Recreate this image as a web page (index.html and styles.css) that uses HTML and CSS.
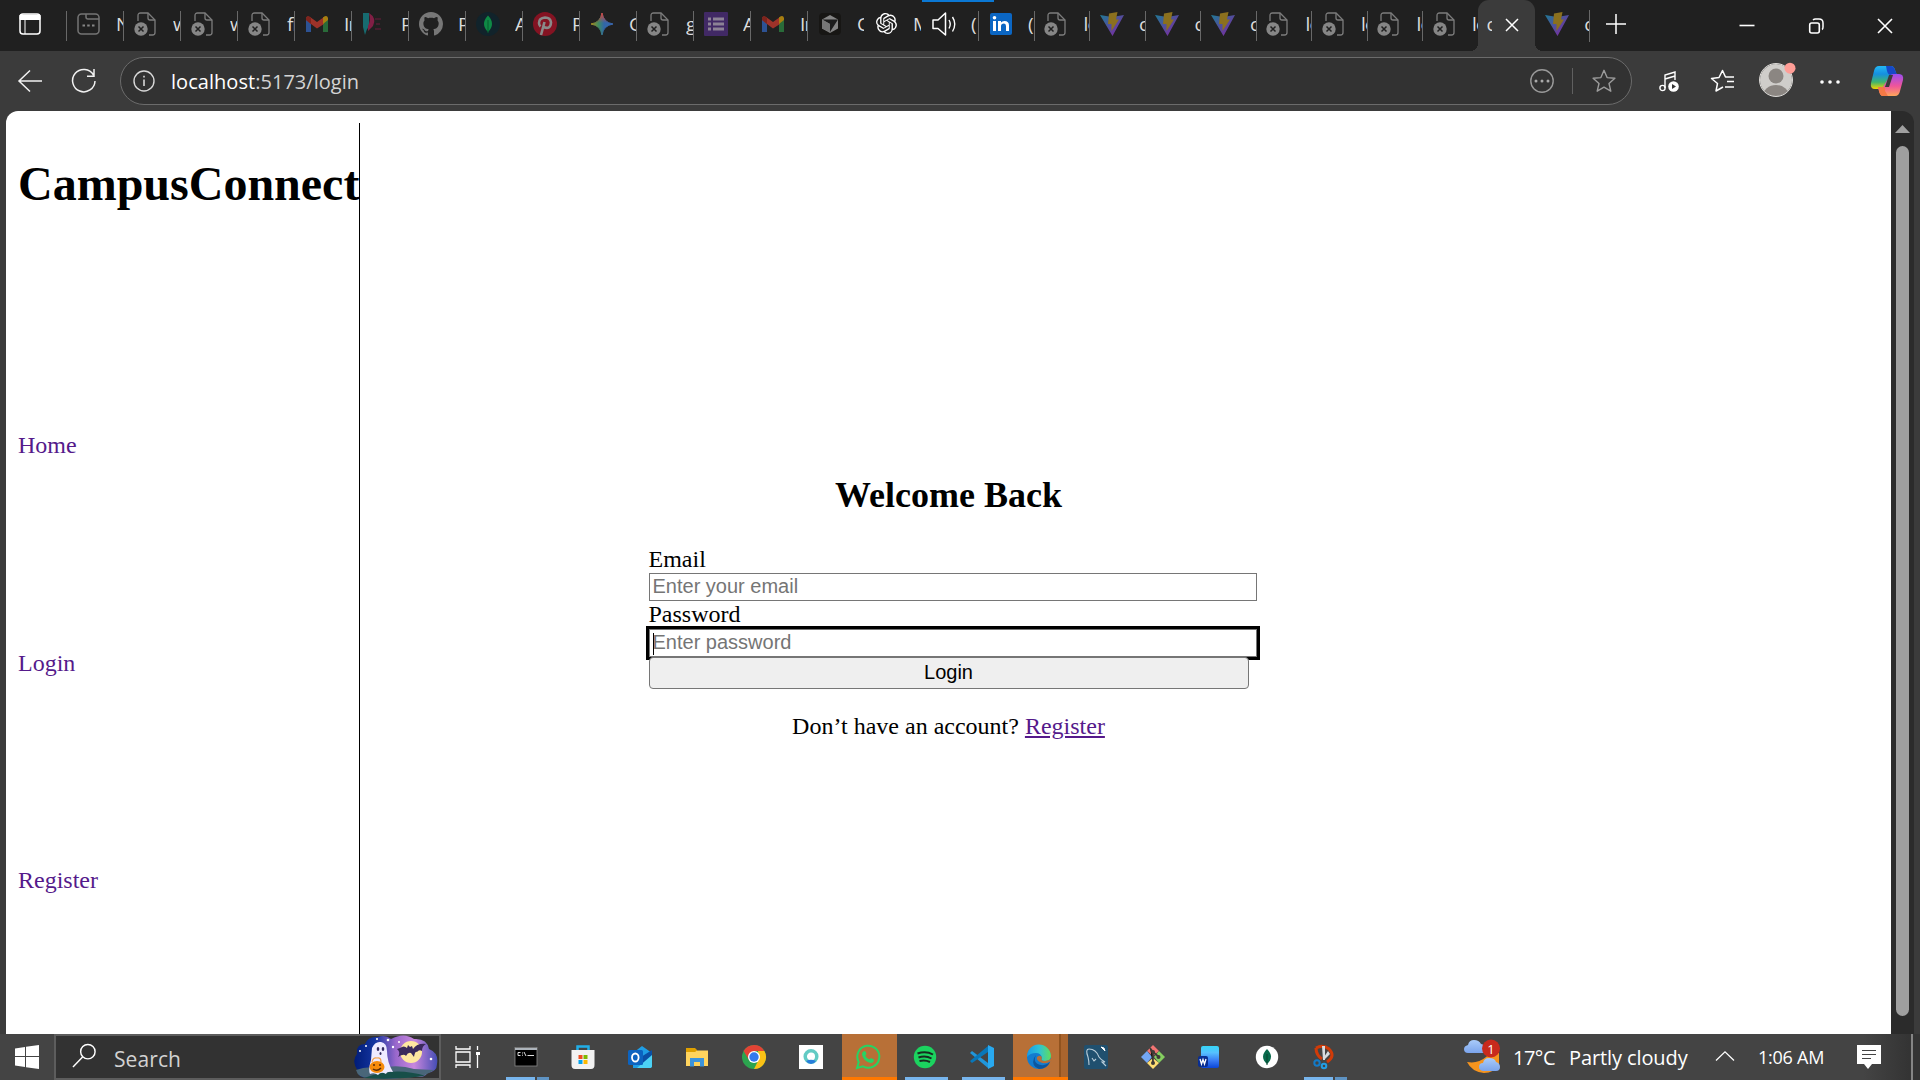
FILE: index.html
```html
<!DOCTYPE html>
<html lang="en">
<head>
<meta charset="utf-8">
<title>CampusConnect</title>
<link rel="stylesheet" href="styles.css">
</head>
<body>
<svg class="defs" width="0" height="0">
  <defs>
    <linearGradient id="gv" x1="0" y1="0" x2="1" y2="1"><stop offset="0" stop-color="#1f7a96"/><stop offset="1" stop-color="#8a1ea3"/></linearGradient>
    <linearGradient id="gg" x1="0" y1="0" x2="1" y2="0"><stop offset="0" stop-color="#a98c1d"/><stop offset=".35" stop-color="#3d8a62"/><stop offset=".6" stop-color="#3166a8"/><stop offset="1" stop-color="#3a67b0"/></linearGradient>
    <linearGradient id="gr" x1="0" y1="0" x2="0" y2="1"><stop offset="0" stop-color="#d04440"/><stop offset=".45" stop-color="#d04440" stop-opacity="0"/></linearGradient>
    <linearGradient id="gc1" x1="0" y1="0" x2="0" y2="1"><stop offset="0" stop-color="#23b8f4"/><stop offset=".35" stop-color="#158fe0"/><stop offset=".7" stop-color="#3fb56d"/><stop offset="1" stop-color="#f5d400"/></linearGradient>
    <linearGradient id="gc2" x1="0" y1="0" x2="0" y2="1"><stop offset="0" stop-color="#9a4cf0"/><stop offset=".55" stop-color="#f0559a"/><stop offset="1" stop-color="#ffa75a"/></linearGradient>
    <linearGradient id="ge" x1="0" y1="0" x2="1" y2="0"><stop offset="0" stop-color="#1a9be6"/><stop offset=".5" stop-color="#2cc2d8"/><stop offset="1" stop-color="#62dd59"/></linearGradient>
    <linearGradient id="gw" x1="0" y1="0" x2="0" y2="1"><stop offset="0" stop-color="#36d5f6"/><stop offset=".3" stop-color="#56c1ff"/><stop offset=".65" stop-color="#3a7df5"/><stop offset="1" stop-color="#0b45d8"/></linearGradient>
    <linearGradient id="gh" x1="0" y1="0" x2="1" y2="0"><stop offset="0" stop-color="#001c78"/><stop offset=".25" stop-color="#1435a0"/><stop offset=".5" stop-color="#9a68cc"/><stop offset=".72" stop-color="#c887dd"/><stop offset="1" stop-color="#454db5"/></linearGradient>
    <linearGradient id="gk" x1="0" y1="0" x2="0" y2="1"><stop offset="0" stop-color="#a9cbfa"/><stop offset="1" stop-color="#7ba4ec"/></linearGradient>
    <clipPath id="avatar-clip"><circle cx="17" cy="17" r="16"/></clipPath>
  </defs>
  <symbol id="file" viewBox="0 0 24 24"><path d="M4 9V3.500Q4 1 6.500 1H14L21 8V20.500Q21 23 18.500 23H15" fill="none" stroke="#7c7c7c" stroke-width="1.300"/><path d="M14 1V6Q14 8 16 8H21" fill="none" stroke="#7c7c7c" stroke-width="1.300"/><circle cx="7" cy="17" r="6.700" fill="#868686"/><path d="M4.500 14.500l5 5M9.500 14.500l-5 5" stroke="#202020" stroke-width="1.500"/></symbol>
  <symbol id="newtab" viewBox="0 0 24 24"><rect x="1" y="2" width="21" height="20" rx="3.500" fill="none" stroke="#747474" stroke-width="1.500"/><path d="M9 2V5Q9 7 11 7H22" fill="none" stroke="#747474" stroke-width="1.500"/><path d="M5.500 12.500h2.500v2H5.500zM10.200 12.500h2.500v2h-2.500zM15 12.500h2.500v2H15z" fill="#868686"/></symbol>
  <symbol id="gmail" viewBox="0 0 24 24"><path d="M1 20V7L6 10.500V20Z" fill="#2d5293"/><path d="M18 20V10.500L23 7V20Z" fill="#296b39"/><path d="M1 8V6Q2 3 5 5L12 10 19 5V12L12 16.500 6 12Z" fill="#9e3229"/><path d="M1 8V6.500Q2 3 5 5L6 5.500V12Z" fill="#7d241d"/><path d="M18 12V5.500Q22 2.500 23 6V8Z" fill="#a77e10"/></symbol>
  <symbol id="pitch" viewBox="0 0 24 24"><path d="M1 1H7V14Q4 18 3 23L1 15Z" fill="#176b70"/><path d="M7 1Q15 6 11 14L6 19V14Q9 9 7 1Z" fill="#811f45"/><path d="M13 7h6M14 12h4M13 17h6" stroke="#531c33" stroke-width="1.500"/></symbol>
  <symbol id="github" viewBox="0 0 16 16"><path fill="#777" d="M8 0C3.580 0 0 3.580 0 8c0 3.540 2.290 6.530 5.470 7.590.4.070.55-.17.55-.38 0-.19-.01-.82-.01-1.490-2.010.37-2.530-.49-2.690-.94-.09-.23-.48-.94-.82-1.130-.28-.15-.68-.52-.01-.53.63-.01 1.080.58 1.230.82.720 1.210 1.870.87 2.330.66.070-.52.28-.87.510-1.070-1.780-.2-3.640-.89-3.640-3.950 0-.87.310-1.590.82-2.150-.08-.2-.36-1.020.08-2.120 0 0 .67-.21 2.200.82.640-.18 1.320-.27 2-.27s1.360.09 2 .27c1.530-1.040 2.200-.82 2.200-.82.440 1.100.16 1.920.08 2.120.510.56.82 1.270.82 2.150 0 3.070-1.870 3.750-3.650 3.950.29.25.540.73.540 1.480 0 1.070-.01 1.930-.01 2.200 0 .21.150.46.550.38A8 8 0 0 0 16 8c0-4.420-3.580-8-8-8z"/></symbol>
  <symbol id="mongo-tab" viewBox="0 0 24 24"><circle cx="12" cy="12" r="12" fill="#11232b"/><path d="M12 3.500Q20 12 12 20Q4 12 12 3.500Z" fill="#0e8a45"/><path d="M12 8V21" stroke="#075c31" stroke-width="1"/></symbol>
  <symbol id="pinterest" viewBox="0 0 24 24"><circle cx="12" cy="12" r="12" fill="#841322"/><path d="M11.500 10L8 23M10.500 15Q17.500 18 18 10.500Q17.500 5.500 12 5.500Q6 6 6 11Q6 13 7.500 14.500" fill="none" stroke="#898989" stroke-width="2.600"/></symbol>
  <symbol id="gemini" viewBox="0 0 24 24"><path d="M12 1Q13.500 10.500 23 12Q13.500 13.500 12 23Q10.500 13.500 1 12Q10.500 10.500 12 1Z" fill="url(#gg)" stroke="url(#gg)"/><path d="M12 1Q13.500 10.500 23 12Q13.500 13.500 12 23Q10.500 13.500 1 12Q10.500 10.500 12 1Z" fill="url(#gr)" stroke="url(#gr)"/></symbol>
  <symbol id="forms" viewBox="0 0 24 24"><rect width="24" height="24" rx="1" fill="#412965"/><path d="M4 5.500h3v3H4zM9 5.500h11v3H9zM4 10.500h3v3H4zM9 10.500h11v3H9zM4 15.500h3v3H4zM9 15.500h11v3H9z" fill="#8c8295"/></symbol>
  <symbol id="cursor" viewBox="0 0 24 24"><rect x="1" y="1" width="22" height="22" rx="4" fill="#171614"/><path d="M12 3L20 7.500V16.500L12 21 4 16.500V7.500Z" fill="#858585"/><path d="M4 7.500H20L12 20V12Z" fill="#1d1d1d"/><path d="M4 7.500L12 12V20L4 16.500Z" fill="#777"/></symbol>
  <symbol id="openai" viewBox="0 0 24 24"><path fill="#fff" d="M22.282 9.821a5.985 5.985 0 0 0-.516-4.910 6.046 6.046 0 0 0-6.510-2.900A6.065 6.065 0 0 0 4.981 4.182a5.985 5.985 0 0 0-3.998 2.900 6.046 6.046 0 0 0 .743 7.097 5.980 5.980 0 0 0 .511 4.911 6.051 6.051 0 0 0 6.515 2.900A5.985 5.985 0 0 0 13.260 24a6.056 6.056 0 0 0 5.772-4.206 5.990 5.990 0 0 0 3.998-2.900 6.056 6.056 0 0 0-.748-7.073zM13.260 22.430a4.476 4.476 0 0 1-2.876-1.041l.141-.080 4.779-2.758a.795.795 0 0 0 .392-.681v-6.737l2.020 1.169a.071.071 0 0 1 .038.052v5.583a4.504 4.504 0 0 1-4.494 4.493zM3.600 18.304a4.471 4.471 0 0 1-.535-3.014l.142.085 4.783 2.759a.771.771 0 0 0 .780 0l5.843-3.369v2.332a.080.080 0 0 1-.033.062L9.740 19.950a4.500 4.500 0 0 1-6.140-1.646zM2.340 7.896a4.485 4.485 0 0 1 2.366-1.973V11.600a.766.766 0 0 0 .388.676l5.815 3.355-2.020 1.168a.076.076 0 0 1-.071 0l-4.830-2.786A4.504 4.504 0 0 1 2.340 7.872zm16.597 3.855l-5.833-3.387L15.119 7.200a.076.076 0 0 1 .071 0l4.830 2.791a4.494 4.494 0 0 1-.676 8.105v-5.678a.790.790 0 0 0-.407-.667zm2.010-3.023l-.141-.085-4.774-2.782a.776.776 0 0 0-.785 0L9.409 9.230V6.897a.066.066 0 0 1 .028-.061l4.830-2.787a4.500 4.500 0 0 1 6.680 4.660zM8.307 12.863l-2.020-1.164a.080.080 0 0 1-.038-.057V6.075a4.500 4.500 0 0 1 7.375-3.453l-.142.080L8.704 5.460a.795.795 0 0 0-.393.681zm1.097-2.365l2.602-1.500 2.607 1.500v2.999l-2.597 1.500-2.607-1.500z"/></symbol>
  <symbol id="speaker" viewBox="0 0 24 24"><path d="M1 8H6L13.500 1V23L6 16.500H1Z" fill="none" stroke="#fff" stroke-width="1.500" stroke-linejoin="round"/><path d="M17 8Q19.500 12 17 16.500M20.500 5Q25 12 20.500 19.500" fill="none" stroke="#fff" stroke-width="1.400"/></symbol>
  <symbol id="linkedin" viewBox="0 0 24 24"><rect x="1" y="1" width="22" height="22" rx="2" fill="#0b66c3"/><path d="M4 9h3v10H4zM9 9h3v1.500Q13 9 15.500 9Q20 9 20 13.500V19H17V14Q17 11.500 15 11.500Q12 11.500 12 14V19H9Z" fill="#fff"/><circle cx="5.500" cy="5.700" r="1.800" fill="#fff"/></symbol>
  <symbol id="vite" viewBox="0 0 24 24"><path d="M0 3L12 5 24 3 12.500 24Z" fill="url(#gv)"/><path d="M9 1.500L17.500 0 16 7.500H19L11.500 19V12H8Z" fill="#8b701e"/></symbol>
  <symbol id="star" viewBox="0 0 24 24"><path d="M12 1.300L15.100 8.600 22.900 9.300 17 14.500 18.800 22.200 12 18.100 5.200 22.200 7 14.500 1.100 9.300 8.900 8.600Z" fill="none" stroke="currentColor" stroke-width="1.400" stroke-linejoin="round"/></symbol>
</svg>

<header class="tabstrip">
  <svg class="workspace" viewBox="0 0 22 22"><rect x="1" y="1" width="20" height="20" rx="3" fill="none" stroke="#fff" stroke-width="1.500"/><path d="M1 2H21V6.500H1ZM6 6V21" fill="#fff" stroke="#fff" stroke-width="1"/></svg>
  <div class="tabs">
    <div class="tab"><svg><use href="#newtab"/></svg><span>N</span></div>
    <div class="tab"><svg><use href="#file"/></svg><span>w</span></div>
    <div class="tab"><svg><use href="#file"/></svg><span>w</span></div>
    <div class="tab"><svg><use href="#file"/></svg><span>fr</span></div>
    <div class="tab"><svg><use href="#gmail"/></svg><span>In</span></div>
    <div class="tab"><svg><use href="#pitch"/></svg><span>P</span></div>
    <div class="tab"><svg><use href="#github"/></svg><span>P</span></div>
    <div class="tab"><svg><use href="#mongo-tab"/></svg><span>A</span></div>
    <div class="tab"><svg><use href="#pinterest"/></svg><span>P</span></div>
    <div class="tab"><svg><use href="#gemini"/></svg><span>G</span></div>
    <div class="tab"><svg><use href="#file"/></svg><span>g</span></div>
    <div class="tab"><svg><use href="#forms"/></svg><span>A</span></div>
    <div class="tab"><svg><use href="#gmail"/></svg><span>In</span></div>
    <div class="tab"><svg><use href="#cursor"/></svg><span>C</span></div>
    <div class="tab plain"><svg class="smaller"><use href="#openai"/></svg><span>M</span></div>
    <div class="tab plain playing"><svg><use href="#speaker"/></svg><span>(</span></div>
    <div class="tab slim"><svg><use href="#linkedin"/></svg><span>(</span></div>
    <div class="tab slim"><svg><use href="#file"/></svg><span>lo</span></div>
    <div class="tab slim"><svg><use href="#vite"/></svg><span>c</span></div>
    <div class="tab slim"><svg><use href="#vite"/></svg><span>c</span></div>
    <div class="tab slim"><svg><use href="#vite"/></svg><span>c</span></div>
    <div class="tab slim"><svg><use href="#file"/></svg><span>lo</span></div>
    <div class="tab slim"><svg><use href="#file"/></svg><span>lo</span></div>
    <div class="tab slim"><svg><use href="#file"/></svg><span>lo</span></div>
    <div class="tab slim"><svg><use href="#file"/></svg><span>lo</span></div>
    <div class="tab active"><span>c</span><svg viewBox="0 0 14 14"><path d="M1 1L13 13M13 1L1 13" stroke="#fff" stroke-width="1.500"/></svg></div>
    <div class="tab slim plain"><svg><use href="#vite"/></svg><span>c</span></div>
  </div>
  <svg class="plus" viewBox="0 0 22 22"><path d="M11 1V21M1 11H21" stroke="#fff" stroke-width="1.500"/></svg>
  <div class="window-buttons">
    <svg viewBox="0 0 18 18"><path d="M1.500 8.500H16.500" stroke="#fff" stroke-width="1.600"/></svg>
    <svg viewBox="0 0 18 18"><rect x="2.700" y="6" width="9.600" height="10" rx="2" fill="none" stroke="#fff" stroke-width="1.600"/><path d="M6 3Q7 2 8.500 2H12Q16 2 16 6V10Q16 12 15 12.500" fill="none" stroke="#fff" stroke-width="1.500"/></svg>
    <svg viewBox="0 0 18 18"><path d="M2 2L16 16M16 2L2 16" stroke="#fff" stroke-width="1.600"/></svg>
  </div>
</header>

<div class="toolbar">
  <svg class="back" viewBox="0 0 24 24"><path d="M24 12H1M12 1.500L1 12 12 22.500" fill="none" stroke="#f2f2f2" stroke-width="1.500"/></svg>
  <svg class="reload" viewBox="0 0 24 24"><path d="M23 12A11.200 11.200 0 1 1 21.500 6M15 7.300H22V0" fill="none" stroke="#f2f2f2" stroke-width="1.500"/></svg>
  <div class="address">
    <svg viewBox="0 0 22 22"><circle cx="11" cy="11" r="10" fill="none" stroke="#d8d8d8" stroke-width="1.400"/><path d="M11 9.500V16M11 5.700V7.500" stroke="#d8d8d8" stroke-width="1.600"/></svg>
    <div class="url"><b>localhost</b>:5173/login</div>
    <svg class="more" viewBox="0 0 24 24"><circle cx="12" cy="12" r="11.200" fill="none" stroke="#999" stroke-width="1.400"/><g fill="#aaa"><circle cx="6" cy="12" r="1.500"/><circle cx="12" cy="12" r="1.500"/><circle cx="18" cy="12" r="1.500"/></g></svg>
    <i class="sep"></i>
    <svg class="fav"><use href="#star"/></svg>
  </div>
  <svg class="music" viewBox="0 0 20 22"><path d="M6 18V5L16 2V10M6 9L16 6" fill="none" stroke="#fff" stroke-width="1.400"/><circle cx="3.500" cy="18" r="2.600" fill="none" stroke="#fff" stroke-width="1.400"/><circle cx="14.500" cy="16.500" r="5.300" fill="#fff"/><path d="M13 14L17 16.500 13 19Z" fill="#333"/></svg>
  <svg class="favorites" viewBox="0 0 25 24"><path d="M13 18L6 22 7.500 14.500 1.500 9.500 9 8.500 12.500 1.500 15.500 8H24M17 12.500H24M15 18H24" fill="none" stroke="#fff" stroke-width="1.500" stroke-linejoin="round"/></svg>
  <svg class="profile" viewBox="0 0 38 36"><g clip-path="url(#avatar-clip)"><rect width="34" height="34" fill="#cfcdca"/><circle cx="17" cy="13" r="7.500" fill="#8b8682"/><ellipse cx="17" cy="33" rx="13" ry="11" fill="#8b8682"/></g><circle cx="17" cy="17" r="16.500" fill="none" stroke="#dddbd8"/><circle cx="31" cy="5.200" r="5.500" fill="#ff9d96"/></svg>
  <svg class="dots" viewBox="0 0 20 6"><g fill="#fff"><circle cx="2" cy="3" r="1.800"/><circle cx="10" cy="3" r="1.800"/><circle cx="18" cy="3" r="1.800"/></g></svg>
  <svg class="copilot" viewBox="0 0 34 32"><path d="M9 1H21Q24 1 25 5L27 10H21L15 21Q14 24 10 24H5Q0 24 1 18L4 6Q5 1 9 1Z" fill="url(#gc1)"/><path d="M16 1H21Q24 1 25 5L27 10H21Q18 10 17 6Z" fill="#1648c7"/><path d="M25 31H13Q10 31 9 26L8 22H13L19 12Q20 9 24 9H29Q34 9 33 15L30 26Q29 31 25 31Z" fill="url(#gc2)"/><path d="M18 31H13Q10 31 9 26L8 22H13Q16 22 15 26Z" fill="#f47945"/><path d="M19 10H23L19 22H15Z" fill="#3b3b3b"/></svg>
</div>

<div class="viewport">
  <div class="page">
    <nav class="sidebar">
      <h1>CampusConnect</h1>
      <a>Home</a><a>Login</a><a>Register</a>
    </nav>
    <main class="content">
      <div class="login">
        <h2>Welcome Back</h2>
        <label class="first">Email</label>
        <div class="field">Enter your email</div>
        <label>Password</label>
        <div class="field focused">Enter password</div>
        <div class="submit">Login</div>
        <p>Don’t have an account? <a>Register</a></p>
      </div>
    </main>
  </div>
  <div class="scrollbar"><svg viewBox="0 0 15 8"><path d="M7.500 0L15 8H0Z" fill="#a0a0a0"/></svg><div class="thumb"></div></div>
</div>

<footer class="taskbar">
  <div class="start"><svg viewBox="0 0 24 24"><path d="M0 3.500L10 2V11H0ZM11 1.800L24 0V11H11ZM0 12H10V22L0 20.500ZM11 12H24V24L11 22.200Z" fill="#fff"/></svg></div>
  <div class="search">
    <svg viewBox="0 0 26 26"><circle cx="16.500" cy="9" r="7.500" fill="none" stroke="#fff" stroke-width="1.500"/><path d="M11 14.500L1 25" stroke="#fff" stroke-width="1.500"/></svg>
    <span>Search</span>
    <svg class="spooky" viewBox="0 0 84 43"><path d="M4 35Q-3 25 3 18Q2 8 11 8Q14 0 24 1Q31 -2 37 3Q50 -4 60 3Q73 2 75 13Q85 17 83 28Q83 36 73 37Q71 43 58 40Q35 45 15 41Q4 43 4 35Z" fill="url(#gh)"/><path d="M2 34Q12 30 25 32Q45 28 60 33L80 34Q72 39 68 40Q35 44 15 42Q4 42 2 34Z" fill="#496679"/><path d="M10 42Q40 30 72 40Q40 44 10 42Z" fill="#174f49"/><circle cx="57" cy="16" r="11" fill="#ffe7a0"/><path d="M43 13L46 12Q50 9 53 12L54 9 56 11 58 10 59 13Q63 7 72 8Q68 10 68 15Q65 13 63 16Q61 15 60 21L57 17Q54 16 52 20Q50 17 44 21Q47 16 43 13Z" fill="#3b2a5c"/><path d="M16 38Q14 34 17 24L18 12Q21 5 27 6Q33 7 33 15Q33 26 39 36Q33 35 32 38Q27 35 24 39Q20 36 16 38Z" fill="#eeeaff"/><ellipse cx="24" cy="13" rx="1.300" ry="2" fill="#322a61"/><ellipse cx="29" cy="13" rx="1.300" ry="2" fill="#322a61"/><ellipse cx="26.500" cy="17.500" rx="1" ry="1.500" fill="#322a61"/><path d="M18 26Q19 21 23 22Q27 21 27 26" fill="none" stroke="#f3a24a" stroke-width="1.200"/><ellipse cx="23" cy="31" rx="7.500" ry="6" fill="#f68b0c"/><path d="M19 29h2M25 29h2M19 33Q23 36 27 32" stroke="#5a2b08" stroke-width="1.500" fill="none"/><g fill="#fff"><circle cx="12" cy="10" r="1"/><circle cx="6" cy="15" r="1"/><circle cx="23" cy="3" r="1"/><circle cx="34" cy="4" r="1.300"/><circle cx="39" cy="11" r="1.200"/><circle cx="45" cy="6" r="1"/><circle cx="77" cy="23" r="1.300"/></g></svg>
  </div>
  <div class="apps">
    <div class="app"><svg viewBox="0 0 24 24"><path d="M1 1V4H15V1M1 23V20H15V23M1 7H15V17H1Z" fill="none" stroke="#fff" stroke-width="1.300"/><path d="M22.500 1V5M22.500 10V23" stroke="#fff" stroke-width="1.300"/><path d="M21 7h4v3h-4z" fill="#fff"/></svg></div>
    <div class="app group"><svg viewBox="0 0 24 24"><rect x="1" y="2.500" width="22" height="18.500" fill="#000" stroke="#888" stroke-width=".8"/><path d="M1 3H23V5H1Z" fill="#adb4bb"/><path d="M6.500 7.500H4V10.500H6.500M8.500 7.500v1M8.500 9.700v1M10 7l2 4M13.500 10.500H20" stroke="#ddd" fill="none"/></svg></div>
    <div class="app"><svg viewBox="0 0 24 24"><path d="M6.500 6V1.500H17.500V6" fill="none" stroke="#20aee8" stroke-width="2.500"/><path d="M.5 5H23.500V20Q23.500 24 20 24H4Q.5 24 .5 20Z" fill="#f2f2f2"/><path d="M7.500 10h4v4h-4z" fill="#f04e23"/><path d="M12.500 10h4v4h-4z" fill="#7eb900"/><path d="M7.500 15h4v4h-4z" fill="#02a3ee"/><path d="M12.500 15h4v4h-4z" fill="#fdb900"/></svg></div>
    <div class="app"><svg viewBox="0 0 24 24"><path d="M5 8L14 1 24 8V21Q24 23 21 23H5Z" fill="#1f9de5"/><path d="M13 12L24 5V15L14 19Z" fill="#0a4fa5"/><path d="M9 23L24 10V21Q24 23 21 23Z" fill="#4cd2f5"/><rect y="5" width="15" height="15" rx="1.500" fill="#0c63c0"/><ellipse cx="7.300" cy="12.500" rx="3.300" ry="4" fill="none" stroke="#fff" stroke-width="1.800"/></svg></div>
    <div class="app"><svg viewBox="0 0 24 24"><path d="M1 3H10L12 5V8H1Z" fill="#dfa000"/><path d="M1 7H10L12 5.500H23V21H1Z" fill="#ffd45e"/><path d="M5 21V13H19V21.500H15V17H9V21.500H5Z" fill="#3c94dc"/></svg></div>
    <div class="app"><svg viewBox="0 0 24 24"><circle cx="12" cy="12" r="12" fill="#2ca44f"/><path d="M1.600 6A12 12 0 0 1 22.400 6H12L7 15Z" fill="#e24335"/><path d="M22.400 6A12 12 0 0 1 12 24L17 14 16 6Z" fill="#fbc116"/><circle cx="12" cy="12" r="6" fill="#fff"/><circle cx="12" cy="12" r="4.700" fill="#3379ed"/></svg></div>
    <div class="app"><svg viewBox="0 0 24 24"><path d="M0 0H24V24H0Z" fill="#fff"/><circle cx="12" cy="11.500" r="5.800" fill="none" stroke="#62cbc4" stroke-width="3.500"/><path d="M7 16Q12 13.500 17 16Q15 19 12 19Q9 19 7 16Z" fill="#287edb"/></svg></div>
    <div class="app alert"><svg viewBox="0 0 24 24"><path d="M1 23L2.700 17A11 11 0 1 1 7 21.300Z" fill="none" stroke="#27d363" stroke-width="2"/><path d="M8.500 6Q10 6 10.500 9Q9 10 9.500 11Q11 14 13.500 14.500L15 13 18 14.500Q18 18 14.500 18Q7 16 6 9.500Q6 6.500 8.500 6Z" fill="#27d363"/></svg></div>
    <div class="app open"><svg viewBox="0 0 24 24"><circle cx="12" cy="12" r="11.200" fill="#1bd35f"/><path d="M4.500 8.500Q13 5.500 20 9.500M5.500 12.500Q12.500 10 18.500 13.500M6.500 16Q12 14.500 17 17" fill="none" stroke="#172c20" stroke-width="2"/></svg></div>
    <div class="app open"><svg viewBox="0 0 24 24"><path d="M0 8L2 6 18 18V23Z" fill="#2096db"/><path d="M0 16L18 1V7L2 18Z" fill="#0877b9"/><path d="M18 0L24 3V21L18 24Z" fill="#28a9f0"/></svg></div>
    <div class="app alert stacked"><svg viewBox="0 0 24 24"><circle cx="12" cy="12" r="12" fill="#137cd0"/><path d="M0 12A12 12 0 0 1 24 11Q24 16 18 16Q13 16 15 13Q14 8 9 8Q3 8 0 12Z" fill="url(#ge)"/><path d="M9 10Q5 18 14 20Q19 21 23 17Q20 24 12 24Q4 21 7 13Z" fill="#0c559e"/><path d="M10 12Q9 15 13 17Q18 20 24 16L25 13Q22 16 18 16Q13 16 15 13Q14 9 10 12Z" fill="#b87037"/></svg></div>
    <div class="app"><svg viewBox="0 0 24 24"><rect width="24" height="24" rx="2" fill="#20506f"/><path d="M5 20Q5 16 4 12Q1 4 5 4Q12 4 15 12Q17 15 21 17L18 17 22 21M8 13L10 16 12 14" fill="none" stroke="#b9ccd8" stroke-width="1.100"/><path d="M17 2L21 6 20 3Z" stroke="#fff" fill="#fff"/></svg></div>
    <div class="app"><svg viewBox="0 0 24 24"><path d="M12 0L18 6 12 11 6 6Z" fill="#f27473"/><path d="M18 6L24 12 18 18 13 12Z" fill="#85cf60"/><path d="M6 6L11 12 6 18 0 12Z" fill="#73a6f5"/><path d="M12 13L18 18 12 24 6 18Z" fill="#ffde73"/><path d="M9 3L12 7V19M12 7L18 12" stroke="#403b38" stroke-width="1.700"/><g fill="#403b38"><circle cx="12" cy="7" r="2"/><circle cx="12" cy="18" r="2"/><circle cx="17.500" cy="12" r="2"/></g></svg></div>
    <div class="app"><svg viewBox="0 0 24 24"><rect x="3" y="1" width="18" height="22" rx="2" fill="url(#gw)"/><rect y="11" width="10" height="11" rx="2" fill="#092e92"/><path d="M2 14L3.500 19 5 14.500 6.500 19 8 14" fill="none" stroke="#fff" stroke-width="1.300"/></svg></div>
    <div class="app"><svg viewBox="0 0 24 24"><circle cx="12" cy="12" r="11.200" fill="#fff"/><path d="M12 4Q20 12 12 19Q4 12 12 4Z" fill="#086a4c"/><path d="M12 9V20" stroke="#08452f"/></svg></div>
    <div class="app group"><svg viewBox="0 0 24 24"><path d="M4 3Q11 -1 17 4Q24 11 15 17M4 3Q4 10 10 14" fill="none" stroke="#d13b08" stroke-width="3"/><path d="M10 1H13V15H11ZM16 6L18 9 12 15V12Z" fill="#d7dbdf"/><circle cx="5" cy="18" r="2.700" fill="none" stroke="#137ac7" stroke-width="2"/><circle cx="12" cy="21" r="2.300" fill="none" stroke="#229ee5" stroke-width="2"/></svg></div>
  </div>
  <div class="tray">
    <svg class="weather" viewBox="0 0 37 34"><path d="M3 23Q14 25 22 18Q27 14 29 14H35V25Q30 34 20 34Q8 33 3 23Z" fill="#f6941e"/><path d="M4 14Q0 14 0 10Q0 7 4 6Q5 1 10 1Q15 1 17 5Q21 5 22 14Z" fill="url(#gk)"/><path d="M19 32Q15 31 15 28Q15 24 19 24Q20 19 25 19Q31 19 32 23Q36 24 36 28Q36 32 32 32Z" fill="url(#gk)"/><circle cx="27" cy="9.500" r="9" fill="#c82a1d"/><text x="27" y="14.500" text-anchor="middle">1</text></svg>
    <span class="temp">17°C</span><span class="sky">Partly cloudy</span>
    <svg class="chevron" viewBox="0 0 18 10"><path d="M0 9.500L9 .8 18 9.500" fill="none" stroke="#fff" stroke-width="1.300"/></svg>
    <span class="clock">1:06 AM</span>
    <svg class="notes" viewBox="0 0 24 24"><path d="M0 0H24V19H15L11 24 7 19H0Z" fill="#fff"/><path d="M5 5.500H19M5 9.500H19M5 13.500H14" stroke="#444" stroke-width="1.200"/></svg>
    <i class="desktop"></i>
  </div>
</footer>
</body>
</html>
```
FILE: styles.css
```css
* { box-sizing: border-box; }
body { margin: 0; width: 1920px; height: 1080px; overflow: hidden; display: flex; flex-direction: column; background: #3b3b3b; font-family: "Open Sans", "Noto Sans", sans-serif; color: #fff; }
svg { display: block; flex: none; overflow: visible; }
.defs { position: absolute; }

.tabstrip { height: 51px; flex: none; background: #202020; display: flex; align-items: center; }
.workspace { width: 22px; height: 22px; margin: 0 25px 4px 19px; }
.tabs { display: flex; height: 51px; width: 1525px; flex: none; }
.tab { width: 57px; flex: none; display: flex; align-items: flex-start; padding: 12px 0 0; font-size: 19px; position: relative; color: #ddd; }
.tab::before { content: ""; width: 1px; height: 30px; background: #686868; margin-top: -1px; }
.tab svg { width: 24px; height: 24px; margin-left: 10px; }
.tab svg.smaller { width: 21px; height: 21px; margin: 1px 1px 0 11px; }
.tab span { width: 8px; height: 26px; overflow: hidden; line-height: 24px; margin-left: 15px; white-space: nowrap; letter-spacing: -.8px; }
.tab.slim { width: 55.5px; }
.tab.slim span { width: 6px; }
.tab.plain::before { background: transparent; }
.playing::after { content: ""; position: absolute; left: 1px; top: 0; width: 72px; height: 2px; background: #0b78d4; z-index: 2; }
.tab.slim.plain { border-right: 1px solid #686868; border-image: linear-gradient(transparent 11px, #686868 11px, #686868 41px, transparent 41px) 1; }
.tab.active { width: 57px; background: #3b3b3b; border-radius: 11px 11px 0 0; }
.tab.active::before { position: absolute; left: -8px; bottom: 0; width: 8px; height: 8px; margin: 0; background: radial-gradient(circle at 0 0, transparent 8px, #3b3b3b 8px); }
.tab.active::after { content: ""; position: absolute; right: -8px; bottom: 0; width: 8px; height: 8px; background: radial-gradient(circle at 100% 0, transparent 8px, #3b3b3b 8px); }
.tab.active span { width: 5px; margin-left: 9px; }
.tab.active svg { width: 14px; height: 14px; margin: 6px 0 0 13px; }
.plus { width: 22px; height: 22px; margin: 0 0 4px 14px; }
.window-buttons { display: flex; gap: 51px; margin-left: 111px; }
.window-buttons svg { width: 18px; height: 18px; }

.toolbar { height: 60px; flex: none; display: flex; align-items: center; }
.back { width: 24px; height: 24px; margin-left: 18px; }
.reload { width: 24px; height: 24px; margin-left: 30px; }
.address { width: 1512px; height: 48px; margin-left: 24px; border: 1px solid #6b6b6b; border-radius: 24px; background: #323232; display: flex; align-items: center; flex: none; padding: 0 15px 0 12px; }
.address svg { width: 22px; height: 22px; }
.url { width: 1375px; flex: none; padding: 2px 0 0 16px; font-size: 20px; line-height: 28px; letter-spacing: .04px; color: #d4d4d4; }
.url b { font-weight: 400; color: #fff; }
.address .more { width: 24px; height: 24px; }
.sep { width: 1px; height: 26px; background: #606060; margin: 0 19px 0 18px; }
.address .fav { width: 24px; height: 24px; color: #9c9c9c; }
.music { width: 20px; height: 22px; margin-left: 27px; }
.favorites { width: 25px; height: 24px; margin-left: 31px; }
.profile { width: 38px; height: 36px; margin-left: 24px; }
.dots { width: 20px; height: 6px; margin: 2px 0 0 23px; }
.copilot { width: 34px; height: 32px; margin-left: 30px; }

.viewport { height: 923px; flex: none; margin: 0 6px; display: flex; }
.page { width: 1885px; background: #fff; border-radius: 12px 0 0 0; padding: 12px 12px 0; display: flex; color: #000; font: 24px "Liberation Serif", serif; }
.sidebar { width: 342px; border-right: 1px solid #000; display: flex; flex-direction: column; }
.sidebar h1 { font-size: 48px; line-height: 55px; margin: 33px 0 4px; height: 177px; flex: none; }
.sidebar a { height: 217.5px; display: flex; align-items: center; flex: none; color: #551a8b; }
.content { flex: 1; padding: 356px 0 0 288.5px; }
.login { width: 600px; }
.login h2 { font-size: 36px; line-height: 41px; margin: -4px 0 30px; text-align: center; }
.login label { display: block; height: 28px; line-height: 27px; }
.login .first { height: 27px; }
.field { width: 608px; height: 28px; border: 1px solid #767676; padding: 0 3px; font: 20px/25px "Liberation Sans", sans-serif; color: #757575; }
.focused { outline: 3px solid #000; position: relative; }
.focused::before { content: ""; position: absolute; left: 3px; top: 3px; width: 1px; height: 22px; background: #000; }
.submit { position: relative; height: 32px; border: 1px solid #767676; border-radius: 4px; background: #efefef; text-align: center; font: 20px/29px "Liberation Sans", sans-serif; }
.login p { margin: 24px 0 0; line-height: 27px; text-align: center; }
.login p a { color: #551a8b; text-decoration: underline; }
.scrollbar { width: 23px; background: #2b2b2b; border-radius: 0 12px 0 0; display: flex; flex-direction: column; align-items: center; }
.scrollbar svg { width: 15px; height: 8px; margin-top: 14px; }
.thumb { width: 13px; height: 870px; margin-top: 13px; border-radius: 7px; background: #9f9f9f; }

.taskbar { height: 46px; flex: none; background: #444; display: flex; }
.start { width: 54px; padding: 11px 15px; }
.start svg { width: 24px; height: 24px; }
.search { width: 387px; border: 2px solid #5d5d5d; background: #323232; display: flex; align-items: center; padding-left: 16px; flex: none; color: #d2d2d2; font-size: 21px; letter-spacing: .1px; }
.search > svg:first-child { width: 25px; height: 25px; margin-top: -3px; }
.search span { width: 240px; margin: 3px 0 0 17px; line-height: 30px; }
.search .spooky { width: 84px; height: 43px; }
.apps { display: flex; flex: none; }
.app { width: 57px; height: 46px; position: relative; padding: 11px 16px 0; }
.app svg { width: 24px; height: 24px; }
.app:first-child { padding-left: 14px; }
.app.open { background: linear-gradient(#77b5ed, #77b5ed) 8px 43px / 43px 3px no-repeat; }
.app.group { background: linear-gradient(90deg, #77b5ed 29px, #444 29px, #444 31px, #5e93c3 31px) 8px 43px / 43px 3px no-repeat; }
.app.alert { background: linear-gradient(#b87037 43px, #ff7800 43px) 2px 0 / 55px 46px no-repeat; }
.app.stacked::after { content: ""; position: absolute; right: 0; top: 0; width: 7px; height: 43px; background: #aa652e; border-left: 2px solid #91531f; }
.tray { flex: 1; display: flex; align-items: center; padding-left: 111px; background: linear-gradient(90deg, #444 90%, #343434 98%); }
.weather { width: 37px; height: 34px; margin-top: -2px; }
.weather text { font-size: 13px; fill: #fff; }
.tray span { flex: none; white-space: nowrap; font-size: 20px; line-height: 28px; margin-top: 2px; }
.tray .temp { width: 56px; margin-left: 12px; letter-spacing: -.5px; }
.tray .sky { width: 147px; letter-spacing: -.1px; }
.chevron { width: 18px; height: 10px; margin-top: -2px; }
.tray .clock { width: 99px; margin-left: 24px; margin-top: 0; font-size: 18px; letter-spacing: -.25px; }
.notes { width: 24px; height: 24px; }
.desktop { width: 2px; height: 46px; margin-left: 30px; background: #858585; }
```
